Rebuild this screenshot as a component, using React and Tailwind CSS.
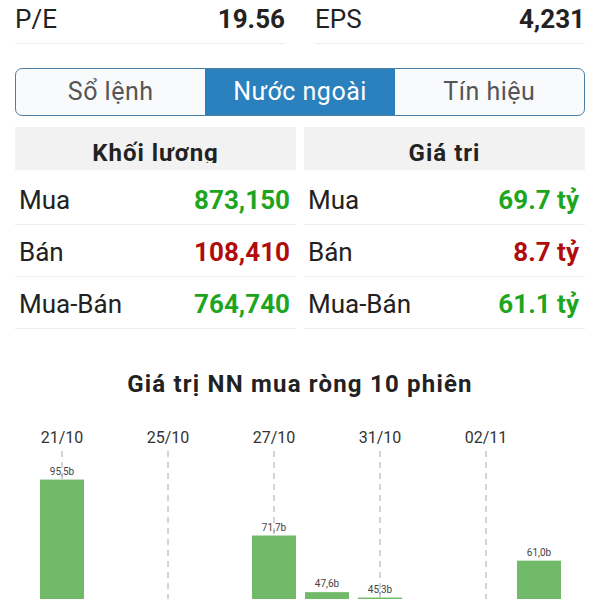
const stats = [
  { label: "P/E", value: "19.56" },
  { label: "EPS", value: "4,231" },
]

const tabs = ["Sổ lệnh", "Nước ngoài", "Tín hiệu"]

const tables = [
  {
    title: "Khối lương",
    rows: [
      { label: "Mua", value: "873,150", color: "text-[#1ea51e]" },
      { label: "Bán", value: "108,410", color: "text-[#b00c0c]" },
      { label: "Mua-Bán", value: "764,740", color: "text-[#1ea51e]" },
    ],
  },
  {
    title: "Giá tri",
    rows: [
      { label: "Mua", value: "69.7 tỷ", color: "text-[#1ea51e]" },
      { label: "Bán", value: "8.7 tỷ", color: "text-[#b00c0c]" },
      { label: "Mua-Bán", value: "61.1 tỷ", color: "text-[#1ea51e]" },
    ],
  },
]

const dates = ["21/10", "25/10", "27/10", "31/10", "02/11"]
const bars = [
  { slot: 0, v: 95.5, label: "95,5b" },
  { slot: 4, v: 71.7, label: "71,7b" },
  { slot: 5, v: 47.6, label: "47,6b" },
  { slot: 6, v: 45.3, label: "45,3b" },
  { slot: 9, v: 61.0, label: "61,0b" },
]

function Chart() {
  const cx = (i) => 62 + 53 * i
  const top = (v) => 305 - v * 2.35
  return (
    <svg width="600" height="200" className="block" style={{ fontFamily: "Roboto, sans-serif" }}>
      {dates.map((d, i) => (
        <text key={d} x={cx(i * 2)} y="44" textAnchor="middle" fontSize="16" fill="#333">
          {d}
        </text>
      ))}
      {bars.map((b) => (
        <text key={b.label} x={cx(b.slot)} y={top(b.v) - 5} textAnchor="middle" fontSize="10" fill="#444">
          {b.label}
        </text>
      ))}
      {dates.map((d, i) => (
        <line key={d} x1={cx(i * 2)} x2={cx(i * 2)} y1="52" y2="210" stroke="#aaa" strokeWidth="1" strokeDasharray="6 5" />
      ))}
      {bars.map((b) => (
        <rect key={b.label} x={cx(b.slot) - 22} y={top(b.v)} width="44" height={305 - top(b.v)} fill="#70ba69" />
      ))}
    </svg>
  )
}

export default function App() {
  return (
    <div className="h-[600px] w-[600px] overflow-hidden bg-white text-[#222]" style={{ fontFamily: "Roboto, 'Noto Sans', sans-serif" }}>
      <div className="grid grid-cols-2 gap-[30px] px-[15px]">
        {stats.map((s) => (
          <div key={s.label} className="flex h-[44px] items-center justify-between border-b border-[#ececec] pb-[4px] text-[26px]">
            <span>{s.label}</span>
            <span className="font-bold">{s.value}</span>
          </div>
        ))}
      </div>

      <div className="mx-[15px] mt-[24px] flex h-[48px] overflow-hidden rounded-[7px] border-[1.5px] border-[#4b7fa3] bg-[#f8fafb]">
        {tabs.map((t, i) => (
          <div
            key={t}
            className={`flex flex-1 items-center justify-center text-[25px] tracking-[0.5px] ${i === 1 ? "bg-[#2b80be] text-white" : "text-[#555]"}`}
          >
            {t}
          </div>
        ))}
      </div>

      <div className="mt-[11px] grid grid-cols-2 gap-[8px] px-[15px]">
        {tables.map((tb) => (
          <div key={tb.title}>
            <div className="mb-[3px] h-[43px] bg-[#f2f2f2]">
              <div className="h-[36px] overflow-hidden pt-[14px] text-center text-[24px] leading-[24px] font-bold tracking-[1px]">
                {tb.title}
              </div>
            </div>
            {tb.rows.map((r) => (
              <div key={r.label} className="flex h-[52px] items-center justify-between border-b border-[#ececec] pt-[3px] pr-[6px] pl-[4px] text-[26px]">
                <span>{r.label}</span>
                <span className={`font-bold ${r.color}`}>{r.value}</span>
              </div>
            ))}
          </div>
        ))}
      </div>

      <div className="mt-[40px] h-[30px] text-center text-[24px] leading-[30px] font-bold tracking-[1.2px]">
        Giá trị NN mua ròng 10 phiên
      </div>
      <Chart />
    </div>
  )
}
